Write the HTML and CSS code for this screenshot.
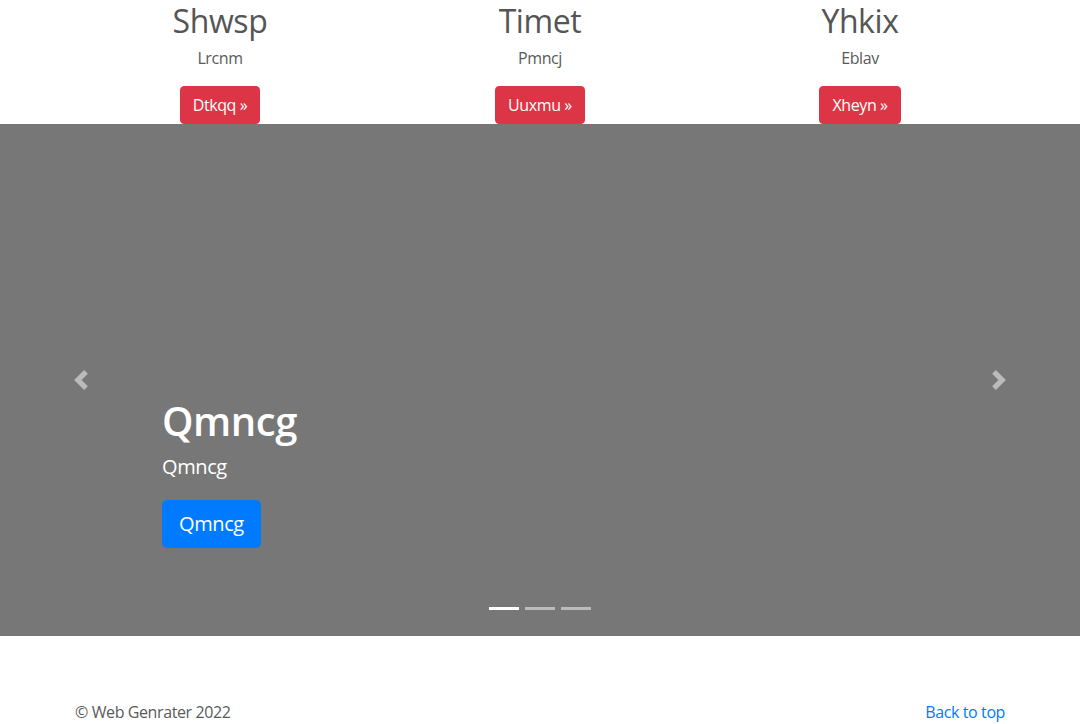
FILE: index.html
```html
<!DOCTYPE html>
<html lang="en">
<head>
<meta charset="utf-8">
<title>Carousel</title>
<link rel="stylesheet" href="styles.css">
</head>
<body>
<div class="container">
  <div class="row">
    <div class="col">
      <h2 class="col-title">Shwsp</h2>
      <p class="col-text">Lrcnm</p>
      <a class="btn btn-danger" href="#">Dtkqq &raquo;</a>
    </div>
    <div class="col">
      <h2 class="col-title">Timet</h2>
      <p class="col-text">Pmncj</p>
      <a class="btn btn-danger" href="#">Uuxmu &raquo;</a>
    </div>
    <div class="col">
      <h2 class="col-title">Yhkix</h2>
      <p class="col-text">Eblav</p>
      <a class="btn btn-danger" href="#">Xheyn &raquo;</a>
    </div>
  </div>
</div>

<div class="carousel">
  <div class="caption">
    <h1 class="caption-title">Qmncg</h1>
    <p class="caption-text">Qmncg</p>
    <a class="btn btn-lg btn-primary" href="#">Qmncg</a>
  </div>
  <a class="control control-prev" href="#" aria-label="Previous">
    <svg class="control-icon" viewBox="0 0 8 8" width="20" height="20"><path fill="#fff" d="M5.25 0l-4 4 4 4 1.5-1.5L4.25 4l2.5-2.5L5.25 0z"/></svg>
  </a>
  <a class="control control-next" href="#" aria-label="Next">
    <svg class="control-icon" viewBox="0 0 8 8" width="20" height="20"><path fill="#fff" d="M2.75 0l-1.5 1.5L3.75 4l-2.5 2.5L2.75 8l4-4-4-4z"/></svg>
  </a>
  <ol class="indicators">
    <li class="indicator active"></li>
    <li class="indicator"></li>
    <li class="indicator"></li>
  </ol>
</div>

<footer class="container footer">
  <p class="footer-copy">&copy; Web Genrater 2022</p>
  <a class="footer-link" href="#">Back to top</a>
</footer>
</body>
</html>
```
FILE: styles.css
```css
*, *::before, *::after { box-sizing: border-box; }

html, body {
  margin: 0;
  padding: 0;
}

body {
  font-family: "Open Sans", "Noto Sans", "Liberation Sans", sans-serif;
  font-size: 16px;
  line-height: 1.5;
  letter-spacing: -0.025em;
  color: #5a5a5a;
  background: #fff;
}

a { text-decoration: none; }

.container {
  width: 960px;
  margin: 0 auto;
  padding: 0 15px;
}

.row {
  display: flex;
  margin: 0 -15px;
}

.col {
  flex: 1 1 0;
  padding: 0 15px;
  text-align: center;
}

.col-title {
  margin: 2px 0 6px;
  font-size: 32px;
  font-weight: 400;
  line-height: 1.2;
  color: #555;
}

.col-text {
  margin: 0 12px 16px;
}

.btn {
  display: inline-block;
  border: 1px solid transparent;
  padding: 6px 12px;
  font-size: 16px;
  line-height: 1.5;
  border-radius: 4px;
  color: #fff;
  vertical-align: top;
}

.btn-danger {
  background: #dc3545;
  border-color: #dc3545;
}

.btn-primary {
  background: #007bff;
  border-color: #007bff;
}

.btn-lg {
  padding: 8px 16px;
  font-size: 20px;
  border-radius: 4.8px;
}

.carousel {
  position: relative;
  height: 512px;
  background: #777;
  display: flex;
  align-items: flex-end;
  padding: 0 15% 48px;
  color: #fff;
}

.caption {
  padding: 20px 0;
  position: relative;
  z-index: 2;
}

.caption-title {
  margin: 0 0 7px;
  font-size: 40px;
  font-weight: 600;
  line-height: 1.2;
}

.caption-text {
  margin: 0 0 18px;
  font-size: 20px;
  line-height: 1.5;
}

.caption .btn {
  margin-bottom: 20px;
}

.control {
  position: absolute;
  top: 0;
  bottom: 0;
  width: 15%;
  display: flex;
  align-items: center;
  justify-content: center;
  opacity: 0.5;
  z-index: 1;
}

.control-prev { left: 0; }
.control-next { right: 0; }

.control-icon {
  display: block;
  width: 20px;
  height: 20px;
}

.indicators {
  position: absolute;
  left: 0;
  right: 0;
  bottom: 0;
  margin: 0 0 16px;
  padding: 0;
  list-style: none;
  display: flex;
  justify-content: center;
  z-index: 3;
}

.indicator {
  width: 30px;
  height: 3px;
  margin: 10px 3px;
  background: #fff;
  opacity: 0.5;
}

.indicator.active { opacity: 1; }

.footer {
  margin-top: 64px;
  display: flex;
  justify-content: space-between;
  align-items: flex-start;
}

.footer-copy {
  margin: 0 0 16px;
}

.footer-link {
  color: #007bff;
}
```
